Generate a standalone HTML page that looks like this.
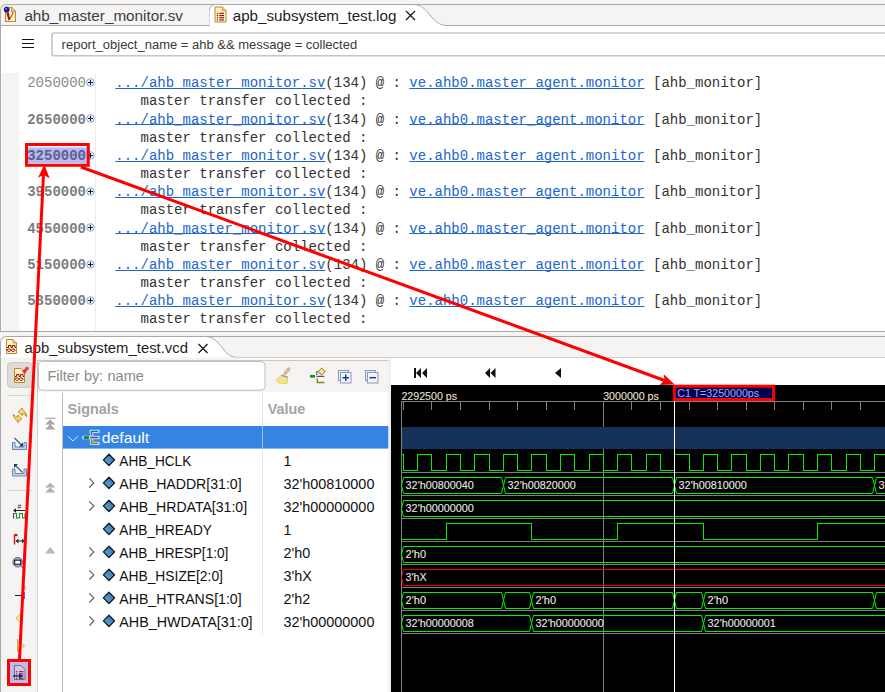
<!DOCTYPE html>
<html><head><meta charset="utf-8"><style>
html,body{margin:0;padding:0;width:885px;height:692px;overflow:hidden;background:#f5f4f2;}
svg{display:block;}
</style></head><body>
<svg width="885" height="692" viewBox="0 0 885 692"><defs><linearGradient id="dg" x1="1" y1="0" x2="0" y2="1"><stop offset="0" stop-color="#3c5cc0"/><stop offset="1" stop-color="#5cc0c0"/></linearGradient><linearGradient id="yg" x1="0" y1="0" x2="0" y2="1"><stop offset="0" stop-color="#fff2b0"/><stop offset="1" stop-color="#eab830"/></linearGradient></defs>
<rect x="0" y="0" width="885" height="692" fill="#f5f4f2"/>
<rect x="7" y="4" width="878" height="1" fill="#a9a9a9"/>
<path d="M0.5,26 L0.5,11 Q0.5,4.5 7,4.5" fill="none" stroke="#a9a9a9" stroke-width="1"/>
<rect x="209" y="10" width="1" height="16" fill="#b4b4b4"/>
<rect x="0" y="25" width="210" height="1" fill="#a9a9a9"/>
<path d="M209.5,26 L209.5,10 Q210,5 215,4.5 L413,4.5 C421,4.5 425,9 430,15 C435,21 439,25.5 447,25.5 L447,27 L209.5,27 Z" fill="#ffffff"/>
<rect x="447" y="26" width="438" height="1.2" fill="#f6f5f4"/>
<path d="M209.5,10 Q210,5 215,4.5 L413,4.5 C421,4.5 425,9 430,15 C435,21 439,25.5 447,25.5 L885,25.5" fill="none" stroke="#a9a9a9" stroke-width="1"/>
<text x="24.4" y="20.7" font-family="'Liberation Sans', sans-serif" font-size="15.3px" fill="#3c3c3c" textLength="158.5" lengthAdjust="spacingAndGlyphs">ahb_master_monitor.sv</text>
<text x="232.7" y="20.7" font-family="'Liberation Sans', sans-serif" font-size="15.2px" fill="#1e1e1e" textLength="163.7" lengthAdjust="spacingAndGlyphs">apb_subsystem_test.log</text>
<path d="M406,11 L415,20 M415,11 L406,20" stroke="#1a1a1a" stroke-width="1.3"/>
<path d="M5.5,7.3 L11.5,7.3 L15.5,11.3 L15.5,21.5 L5.5,21.5 Z" fill="#fdf0c4" stroke="#b88c2c" stroke-width="1.1"/>
<path d="M11.5,7.3 L11.5,11.3 L15.5,11.3" fill="#e8d090" stroke="#b88c2c" stroke-width="0.8"/>
<path d="M6.3,12.5 L8.8,12.5 L9.8,18 L12.5,13.5 L11.8,12.5 L13.8,12.5 L9.5,20.3 L8.4,20.3 Z" fill="#9a1212"/>
<circle cx="6.7" cy="9.6" r="2.9" fill="#13208a"/><circle cx="6.1" cy="8.9" r="1.1" fill="#5a70c8"/>
<path d="M215,7 L222.5,7 L226,10.5 L226,22 L215,22 Z" fill="#fbeec0" stroke="#b48a30" stroke-width="1"/>
<path d="M222.5,7 L222.5,10.5 L226,10.5" fill="#e8d090" stroke="#b48a30" stroke-width="0.8"/>
<rect x="216.8" y="12.8" width="1.2" height="1.1" fill="#9a0a0a"/><rect x="219.3" y="12.8" width="4.7" height="1.1" fill="#9a0a0a"/>
<rect x="216.8" y="15.0" width="1.2" height="1.1" fill="#9a0a0a"/><rect x="219.3" y="15.0" width="4.7" height="1.1" fill="#9a0a0a"/>
<rect x="216.8" y="17.2" width="1.2" height="1.1" fill="#9a0a0a"/><rect x="219.3" y="17.2" width="4.7" height="1.1" fill="#9a0a0a"/>
<rect x="216.8" y="19.4" width="1.2" height="1.1" fill="#9a0a0a"/><rect x="219.3" y="19.4" width="4.7" height="1.1" fill="#9a0a0a"/>
<rect x="1" y="26" width="884" height="305" fill="#ffffff"/>
<rect x="0" y="26" width="1" height="305" fill="#a9a9a9"/>
<rect x="22" y="39" width="12" height="1" fill="#111"/>
<rect x="22" y="43" width="12" height="1" fill="#111"/>
<rect x="22" y="47" width="12" height="1" fill="#111"/>
<rect x="52" y="33" width="840" height="22.8" rx="2" fill="#fff" stroke="#c6c6c6" stroke-width="1.6"/>
<text x="61.6" y="49.2" font-family="'Liberation Sans', sans-serif" font-size="13px" fill="#3a3a3a">report_object_name = ahb &amp;&amp; message = collected</text>
<rect x="2" y="73" width="17" height="258" fill="#f4f4f3"/>
<rect x="95" y="73" width="1" height="258" fill="#ececec"/>
<text x="86" y="87.3" text-anchor="end" font-family="'Liberation Mono', monospace" font-size="14px" font-weight="normal" fill="#8a8a8a">2050000</text>
<circle cx="90.5" cy="82.5" r="3.8" fill="#e2f2fc" stroke="#90a8c4" stroke-width="1"/>
<rect x="88" y="82" width="5" height="1" fill="#101a34"/><rect x="90" y="80" width="1" height="5" fill="#101a34"/>
<text x="115.3" y="87.3" font-family="'Liberation Mono', monospace" font-size="14px" fill="#333"><tspan fill="#2166cc">.../ahb_master_monitor.sv</tspan>(134) @ : <tspan fill="#2166cc">ve.ahb0.master_agent.monitor</tspan> [ahb_monitor]</text>
<rect x="115.3" y="88" width="210.0" height="1" fill="#2166cc"/>
<rect x="409.3" y="88" width="235.20000000000002" height="1" fill="#2166cc"/>
<text x="140.5" y="105.44999999999999" font-family="'Liberation Mono', monospace" font-size="14px" fill="#333">master transfer collected :</text>
<text x="86" y="123.6" text-anchor="end" font-family="'Liberation Mono', monospace" font-size="14px" font-weight="bold" fill="#7d7d7d">2650000</text>
<circle cx="90.5" cy="118.5" r="3.8" fill="#e2f2fc" stroke="#90a8c4" stroke-width="1"/>
<rect x="88" y="118" width="5" height="1" fill="#101a34"/><rect x="90" y="116" width="1" height="5" fill="#101a34"/>
<text x="115.3" y="123.6" font-family="'Liberation Mono', monospace" font-size="14px" fill="#333"><tspan fill="#2166cc">.../ahb_master_monitor.sv</tspan>(134) @ : <tspan fill="#2166cc">ve.ahb0.master_agent.monitor</tspan> [ahb_monitor]</text>
<rect x="115.3" y="124" width="210.0" height="1" fill="#2166cc"/>
<rect x="409.3" y="124" width="235.20000000000002" height="1" fill="#2166cc"/>
<text x="140.5" y="141.75" font-family="'Liberation Mono', monospace" font-size="14px" fill="#333">master transfer collected :</text>
<rect x="26.5" y="147.39999999999998" width="61" height="16" fill="#b8b8f4"/>
<text x="86" y="159.89999999999998" text-anchor="end" font-family="'Liberation Mono', monospace" font-size="14px" font-weight="bold" fill="#5d5d8c">3250000</text>
<circle cx="90.5" cy="155.5" r="3.8" fill="#e2f2fc" stroke="#90a8c4" stroke-width="1"/>
<rect x="88" y="155" width="5" height="1" fill="#101a34"/><rect x="90" y="153" width="1" height="5" fill="#101a34"/>
<text x="115.3" y="159.89999999999998" font-family="'Liberation Mono', monospace" font-size="14px" fill="#333"><tspan fill="#2166cc">.../ahb_master_monitor.sv</tspan>(134) @ : <tspan fill="#2166cc">ve.ahb0.master_agent.monitor</tspan> [ahb_monitor]</text>
<rect x="115.3" y="161" width="210.0" height="1" fill="#2166cc"/>
<rect x="409.3" y="161" width="235.20000000000002" height="1" fill="#2166cc"/>
<text x="140.5" y="178.04999999999998" font-family="'Liberation Mono', monospace" font-size="14px" fill="#333">master transfer collected :</text>
<text x="86" y="196.2" text-anchor="end" font-family="'Liberation Mono', monospace" font-size="14px" font-weight="bold" fill="#7d7d7d">3950000</text>
<circle cx="90.5" cy="191.5" r="3.8" fill="#e2f2fc" stroke="#90a8c4" stroke-width="1"/>
<rect x="88" y="191" width="5" height="1" fill="#101a34"/><rect x="90" y="189" width="1" height="5" fill="#101a34"/>
<text x="115.3" y="196.2" font-family="'Liberation Mono', monospace" font-size="14px" fill="#333"><tspan fill="#2166cc">.../ahb_master_monitor.sv</tspan>(134) @ : <tspan fill="#2166cc">ve.ahb0.master_agent.monitor</tspan> [ahb_monitor]</text>
<rect x="115.3" y="197" width="210.0" height="1" fill="#2166cc"/>
<rect x="409.3" y="197" width="235.20000000000002" height="1" fill="#2166cc"/>
<text x="140.5" y="214.35" font-family="'Liberation Mono', monospace" font-size="14px" fill="#333">master transfer collected :</text>
<text x="86" y="232.5" text-anchor="end" font-family="'Liberation Mono', monospace" font-size="14px" font-weight="bold" fill="#7d7d7d">4550000</text>
<circle cx="90.5" cy="227.5" r="3.8" fill="#e2f2fc" stroke="#90a8c4" stroke-width="1"/>
<rect x="88" y="227" width="5" height="1" fill="#101a34"/><rect x="90" y="225" width="1" height="5" fill="#101a34"/>
<text x="115.3" y="232.5" font-family="'Liberation Mono', monospace" font-size="14px" fill="#333"><tspan fill="#2166cc">.../ahb_master_monitor.sv</tspan>(134) @ : <tspan fill="#2166cc">ve.ahb0.master_agent.monitor</tspan> [ahb_monitor]</text>
<rect x="115.3" y="233" width="210.0" height="1" fill="#2166cc"/>
<rect x="409.3" y="233" width="235.20000000000002" height="1" fill="#2166cc"/>
<text x="140.5" y="250.65" font-family="'Liberation Mono', monospace" font-size="14px" fill="#333">master transfer collected :</text>
<text x="86" y="268.8" text-anchor="end" font-family="'Liberation Mono', monospace" font-size="14px" font-weight="bold" fill="#7d7d7d">5150000</text>
<circle cx="90.5" cy="264.5" r="3.8" fill="#e2f2fc" stroke="#90a8c4" stroke-width="1"/>
<rect x="88" y="264" width="5" height="1" fill="#101a34"/><rect x="90" y="262" width="1" height="5" fill="#101a34"/>
<text x="115.3" y="268.8" font-family="'Liberation Mono', monospace" font-size="14px" fill="#333"><tspan fill="#2166cc">.../ahb_master_monitor.sv</tspan>(134) @ : <tspan fill="#2166cc">ve.ahb0.master_agent.monitor</tspan> [ahb_monitor]</text>
<rect x="115.3" y="270" width="210.0" height="1" fill="#2166cc"/>
<rect x="409.3" y="270" width="235.20000000000002" height="1" fill="#2166cc"/>
<text x="140.5" y="286.95" font-family="'Liberation Mono', monospace" font-size="14px" fill="#333">master transfer collected :</text>
<text x="86" y="305.09999999999997" text-anchor="end" font-family="'Liberation Mono', monospace" font-size="14px" font-weight="bold" fill="#7d7d7d">5850000</text>
<circle cx="90.5" cy="300.5" r="3.8" fill="#e2f2fc" stroke="#90a8c4" stroke-width="1"/>
<rect x="88" y="300" width="5" height="1" fill="#101a34"/><rect x="90" y="298" width="1" height="5" fill="#101a34"/>
<text x="115.3" y="305.09999999999997" font-family="'Liberation Mono', monospace" font-size="14px" fill="#333"><tspan fill="#2166cc">.../ahb_master_monitor.sv</tspan>(134) @ : <tspan fill="#2166cc">ve.ahb0.master_agent.monitor</tspan> [ahb_monitor]</text>
<rect x="115.3" y="306" width="210.0" height="1" fill="#2166cc"/>
<rect x="409.3" y="306" width="235.20000000000002" height="1" fill="#2166cc"/>
<text x="140.5" y="323.24999999999994" font-family="'Liberation Mono', monospace" font-size="14px" fill="#333">master transfer collected :</text>
<rect x="0" y="331" width="885" height="1" fill="#a9a9a9"/>
<rect x="205" y="336" width="680" height="1" fill="#a9a9a9"/>
<rect x="0" y="357" width="885" height="1" fill="#a9a9a9"/>
<path d="M0.5,358 L0.5,343 Q0.5,336.5 7,336.5 L205,336.5 C215,336.5 219,344 224,350 C228,355 232,357.5 238,357.5 L238,358 Z" fill="#ffffff"/>
<path d="M0.5,358 L0.5,343 Q0.5,336.5 7,336.5 L205,336.5 C215,336.5 219,344 224,350 C228,355 232,357.5 238,357.5" fill="none" stroke="#a9a9a9" stroke-width="1"/>
<text x="24.4" y="352.8" font-family="'Liberation Sans', sans-serif" font-size="15.2px" fill="#1e1e1e" textLength="163.6" lengthAdjust="spacingAndGlyphs">apb_subsystem_test.vcd</text>
<path d="M198.5,344 L207.5,353 M207.5,344 L198.5,353" stroke="#1a1a1a" stroke-width="1.3"/>
<path d="M6.5,339.5 L13,339.5 L16.5,343 L16.5,353.5 L6.5,353.5 Z" fill="#fcf0c4" stroke="#b48a30" stroke-width="1"/>
<path d="M13,339.5 L13,343 L16.5,343" fill="#e8d090" stroke="#b48a30" stroke-width="0.8"/>
<path d="M7,347.5 h1.5 v-2 h2.5 v2 h1.5 v-2 h2.5 v2 h1" fill="none" stroke="#9a0a0a" stroke-width="1"/>
<path d="M7,350.2 l1.2,-1.2 h1.6 l1.2,1.2 l-1.2,1.2 h-1.6 Z M11.2,350.2 l1.2,-1.2 h1.6 l1.2,1.2 l-1.2,1.2 h-1.6 Z" fill="none" stroke="#9a0a0a" stroke-width="1"/>
<rect x="0" y="357.5" width="885" height="334.5" fill="#f5f4f2"/>
<rect x="238" y="358" width="647" height="2" fill="#faf9f8"/>
<rect x="37" y="360" width="848" height="1" fill="#cdc7c1"/>
<rect x="0" y="358" width="1" height="334" fill="#a9a9a9"/>
<rect x="37" y="360" width="1" height="332" fill="#cbc6c1"/>
<rect x="37.8" y="392.3" width="351" height="300" fill="#ffffff"/>
<rect x="7.5" y="362.5" width="24.5" height="25" rx="3.5" fill="#dedad5" stroke="#cdc9c4" stroke-width="1"/>
<rect x="7" y="395" width="25" height="1" fill="#d8d6d3"/>
<rect x="7" y="490" width="25" height="1" fill="#d8d6d3"/>
<rect x="38.5" y="361.5" width="226.5" height="28.7" rx="4" fill="#ffffff" stroke="#c2beb9" stroke-width="1"/>
<text x="47.4" y="380.8" font-family="'Liberation Sans', sans-serif" font-size="14.6px" fill="#8d8a86">Filter by: name</text>
<rect x="62" y="393" width="1" height="299" fill="#bcbcbc"/>
<rect x="262" y="393" width="1" height="241" fill="#e6e6e6"/>
<text x="67.6" y="413.6" font-family="'Liberation Sans', sans-serif" font-size="14.4px" font-weight="bold" fill="#a3a3a3">Signals</text>
<text x="267.7" y="413.6" font-family="'Liberation Sans', sans-serif" font-size="14.4px" font-weight="bold" fill="#a3a3a3">Value</text>
<rect x="63" y="426" width="325.5" height="22.6" fill="#3584e4"/>
<rect x="262" y="426" width="1" height="22.6" fill="#ffffff" opacity="0.5"/>
<path d="M68.2,436.4 L73,441 L77.8,436.4" fill="none" stroke="#dce6f8" stroke-width="1"/>
<text x="101.8" y="442.6" font-family="'Liberation Sans', sans-serif" font-size="15.4px" fill="#ffffff" textLength="47.3" lengthAdjust="spacingAndGlyphs">default</text>
<path d="M83.9,437.5 h5 M91.4,431.4 h6.5 M91.6,431.4 v4 M90.2,437.5 h7.7 M91.6,439.6 v3.8 h6.3" fill="none" stroke="#bcd6f8" stroke-width="3.4" stroke-linecap="square"/>
<rect x="83.9" y="436.2" width="5" height="2.7" fill="#0a8a2a"/>
<path d="M97.9,431.4 h-6.1 q-0.3,0 -0.3,0.4 v2.8 q0,0.6 -0.6,0.6" fill="none" stroke="#1a7a6a" stroke-width="1.3"/>
<path d="M90.2,437.5 h7.7" stroke="#8a2a8a" stroke-width="1.3"/>
<path d="M91,439.6 q0.6,0 0.6,0.6 v3.2 h6.3" fill="none" stroke="#6a8a10" stroke-width="1.3"/>
<path d="M109,454.3 L114.6,459.90000000000003 L109,465.50000000000006 L103.4,459.90000000000003 Z" fill="url(#dg)" stroke="#0e1620" stroke-width="1.3" stroke-linejoin="round"/>
<text x="119.3" y="465.8" font-family="'Liberation Sans', sans-serif" font-size="14.2px" fill="#111" textLength="72.0" lengthAdjust="spacingAndGlyphs">AHB_HCLK</text>
<text x="283.6" y="465.8" font-family="'Liberation Sans', sans-serif" font-size="14.4px" fill="#111">1</text>
<path d="M109,477.3 L114.6,482.90000000000003 L109,488.50000000000006 L103.4,482.90000000000003 Z" fill="url(#dg)" stroke="#0e1620" stroke-width="1.3" stroke-linejoin="round"/>
<path d="M89.4,478.50000000000006 L93.8,482.90000000000003 L89.4,487.50000000000006" fill="none" stroke="#5a5a5a" stroke-width="1.1"/>
<text x="119.3" y="488.8" font-family="'Liberation Sans', sans-serif" font-size="14.2px" fill="#111" textLength="122.3" lengthAdjust="spacingAndGlyphs">AHB_HADDR[31:0]</text>
<text x="283.6" y="488.8" font-family="'Liberation Sans', sans-serif" font-size="14.4px" fill="#111">32'h00810000</text>
<path d="M109,500.3 L114.6,505.90000000000003 L109,511.50000000000006 L103.4,505.90000000000003 Z" fill="url(#dg)" stroke="#0e1620" stroke-width="1.3" stroke-linejoin="round"/>
<path d="M89.4,501.50000000000006 L93.8,505.90000000000003 L89.4,510.50000000000006" fill="none" stroke="#5a5a5a" stroke-width="1.1"/>
<text x="119.3" y="511.8" font-family="'Liberation Sans', sans-serif" font-size="14.2px" fill="#111" textLength="127.8" lengthAdjust="spacingAndGlyphs">AHB_HRDATA[31:0]</text>
<text x="283.6" y="511.8" font-family="'Liberation Sans', sans-serif" font-size="14.4px" fill="#111">32'h00000000</text>
<path d="M109,523.3 L114.6,528.9 L109,534.5 L103.4,528.9 Z" fill="url(#dg)" stroke="#0e1620" stroke-width="1.3" stroke-linejoin="round"/>
<text x="119.3" y="534.8" font-family="'Liberation Sans', sans-serif" font-size="14.2px" fill="#111" textLength="92.6" lengthAdjust="spacingAndGlyphs">AHB_HREADY</text>
<text x="283.6" y="534.8" font-family="'Liberation Sans', sans-serif" font-size="14.4px" fill="#111">1</text>
<path d="M109,546.3 L114.6,551.9 L109,557.5 L103.4,551.9 Z" fill="url(#dg)" stroke="#0e1620" stroke-width="1.3" stroke-linejoin="round"/>
<path d="M89.4,547.5 L93.8,551.9 L89.4,556.5" fill="none" stroke="#5a5a5a" stroke-width="1.1"/>
<text x="119.3" y="557.8" font-family="'Liberation Sans', sans-serif" font-size="14.2px" fill="#111" textLength="109.1" lengthAdjust="spacingAndGlyphs">AHB_HRESP[1:0]</text>
<text x="283.6" y="557.8" font-family="'Liberation Sans', sans-serif" font-size="14.4px" fill="#111">2'h0</text>
<path d="M109,569.3 L114.6,574.9 L109,580.5 L103.4,574.9 Z" fill="url(#dg)" stroke="#0e1620" stroke-width="1.3" stroke-linejoin="round"/>
<path d="M89.4,570.5 L93.8,574.9 L89.4,579.5" fill="none" stroke="#5a5a5a" stroke-width="1.1"/>
<text x="119.3" y="580.8" font-family="'Liberation Sans', sans-serif" font-size="14.2px" fill="#111" textLength="103.6" lengthAdjust="spacingAndGlyphs">AHB_HSIZE[2:0]</text>
<text x="283.6" y="580.8" font-family="'Liberation Sans', sans-serif" font-size="14.4px" fill="#111">3'hX</text>
<path d="M109,592.3 L114.6,597.9 L109,603.5 L103.4,597.9 Z" fill="url(#dg)" stroke="#0e1620" stroke-width="1.3" stroke-linejoin="round"/>
<path d="M89.4,593.5 L93.8,597.9 L89.4,602.5" fill="none" stroke="#5a5a5a" stroke-width="1.1"/>
<text x="119.3" y="603.8" font-family="'Liberation Sans', sans-serif" font-size="14.2px" fill="#111" textLength="122.3" lengthAdjust="spacingAndGlyphs">AHB_HTRANS[1:0]</text>
<text x="283.6" y="603.8" font-family="'Liberation Sans', sans-serif" font-size="14.4px" fill="#111">2'h2</text>
<path d="M109,615.3 L114.6,620.9 L109,626.5 L103.4,620.9 Z" fill="url(#dg)" stroke="#0e1620" stroke-width="1.3" stroke-linejoin="round"/>
<path d="M89.4,616.5 L93.8,620.9 L89.4,625.5" fill="none" stroke="#5a5a5a" stroke-width="1.1"/>
<text x="119.3" y="626.8" font-family="'Liberation Sans', sans-serif" font-size="14.2px" fill="#111" textLength="133.3" lengthAdjust="spacingAndGlyphs">AHB_HWDATA[31:0]</text>
<text x="283.6" y="626.8" font-family="'Liberation Sans', sans-serif" font-size="14.4px" fill="#111">32'h00000000</text>
<rect x="388.5" y="358" width="2.5" height="334" fill="#f0efee"/>
<rect x="391" y="358" width="494" height="27" fill="#ffffff"/>
<rect x="391" y="385" width="494" height="307" fill="#000000"/>
<rect x="414" y="368" width="2" height="10" fill="#111"/><path d="M421,368 L416,373 L421,378 Z M427,368 L422,373 L427,378 Z" fill="#111"/>
<path d="M490,368 L485,373 L490,378 Z M495.5,368 L490.5,373 L495.5,378 Z" fill="#111"/>
<path d="M561,368 L555,373 L561,378 Z" fill="#111"/>
<text x="401.4" y="400" font-family="'Liberation Sans', sans-serif" font-size="10.15px" fill="#eee6d0" stroke="#eee6d0" stroke-width="0.08" textLength="55.7" lengthAdjust="spacingAndGlyphs">2292500 ps</text>
<text x="603.2" y="400" font-family="'Liberation Sans', sans-serif" font-size="10.15px" fill="#eee6d0" stroke="#eee6d0" stroke-width="0.08" textLength="55.7" lengthAdjust="spacingAndGlyphs">3000000 ps</text>
<rect x="401" y="401" width="484" height="1" fill="#808080"/>
<rect x="403" y="402" width="1" height="8" fill="#808080"/>
<rect x="431" y="402" width="1" height="8" fill="#808080"/>
<rect x="460" y="402" width="1" height="8" fill="#808080"/>
<rect x="489" y="402" width="1" height="8" fill="#808080"/>
<rect x="517" y="402" width="1" height="8" fill="#808080"/>
<rect x="546" y="402" width="1" height="8" fill="#808080"/>
<rect x="574" y="402" width="1" height="8" fill="#808080"/>
<rect x="603" y="402" width="1" height="8" fill="#808080"/>
<rect x="631" y="402" width="1" height="8" fill="#808080"/>
<rect x="660" y="402" width="1" height="8" fill="#808080"/>
<rect x="689" y="402" width="1" height="8" fill="#808080"/>
<rect x="717" y="402" width="1" height="8" fill="#808080"/>
<rect x="746" y="402" width="1" height="8" fill="#808080"/>
<rect x="774" y="402" width="1" height="8" fill="#808080"/>
<rect x="803" y="402" width="1" height="8" fill="#808080"/>
<rect x="831" y="402" width="1" height="8" fill="#808080"/>
<rect x="860" y="402" width="1" height="8" fill="#808080"/>
<rect x="401" y="401" width="1" height="291" fill="#808080"/>
<rect x="603" y="401" width="1" height="291" fill="#808080"/>
<rect x="402" y="427" width="483" height="22" fill="#17325a"/>
<rect x="402" y="472" width="483" height="1" fill="#808080"/>
<rect x="402" y="495" width="483" height="1" fill="#808080"/>
<rect x="402" y="518" width="483" height="1" fill="#808080"/>
<rect x="402" y="541" width="483" height="1" fill="#808080"/>
<rect x="402" y="564" width="483" height="1" fill="#808080"/>
<rect x="402" y="587" width="483" height="1" fill="#808080"/>
<rect x="402" y="610" width="483" height="1" fill="#808080"/>
<rect x="402" y="633" width="483" height="1" fill="#808080"/>
<path d="M401,454.5 L403.5,454.5 L403.5,470.5 L417.5,470.5 L417.5,454.5 L431.5,454.5 L431.5,470.5 L446.5,470.5 L446.5,454.5 L460.5,454.5 L460.5,470.5 L474.5,470.5 L474.5,454.5 L489.5,454.5 L489.5,470.5 L503.5,470.5 L503.5,454.5 L517.5,454.5 L517.5,470.5 L531.5,470.5 L531.5,454.5 L546.5,454.5 L546.5,470.5 L560.5,470.5 L560.5,454.5 L574.5,454.5 L574.5,470.5 L589.5,470.5 L589.5,454.5 L603.5,454.5 L603.5,470.5 L617.5,470.5 L617.5,454.5 L631.5,454.5 L631.5,470.5 L646.5,470.5 L646.5,454.5 L660.5,454.5 L660.5,470.5 L674.5,470.5 L674.5,454.5 L689.5,454.5 L689.5,470.5 L703.5,470.5 L703.5,454.5 L717.5,454.5 L717.5,470.5 L731.5,470.5 L731.5,454.5 L746.5,454.5 L746.5,470.5 L760.5,470.5 L760.5,454.5 L774.5,454.5 L774.5,470.5 L788.5,470.5 L788.5,454.5 L803.5,454.5 L803.5,470.5 L817.5,470.5 L817.5,454.5 L831.5,454.5 L831.5,470.5 L846.5,470.5 L846.5,454.5 L860.5,454.5 L860.5,470.5 L874.5,470.5 L874.5,454.5 L888.5,454.5 L888.5,470.5 L886,470.5" fill="none" stroke="#00f000" stroke-width="1" shape-rendering="crispEdges"/>
<path d="M401.5,485.5 L403.5,477.5 L501.5,477.5 L503.5,485.5 L501.5,493.5 L403.5,493.5 Z M503.5,485.5 L505.5,477.5 L672.5,477.5 L674.5,485.5 L672.5,493.5 L505.5,493.5 Z M674.5,485.5 L676.5,477.5 L872.5,477.5 L874.5,485.5 L872.5,493.5 L676.5,493.5 Z M874.5,485.5 L876.5,477.5 L898.5,477.5 L900.5,485.5 L898.5,493.5 L876.5,493.5 Z" fill="none" stroke="#00f000" stroke-width="1"/>
<text x="405.6" y="489.2" font-family="'Liberation Sans', sans-serif" font-size="10.15px" fill="#ececE4" stroke="#ececE4" stroke-width="0.08" textLength="68.3" lengthAdjust="spacingAndGlyphs">32'h00800040</text>
<text x="507.6" y="489.2" font-family="'Liberation Sans', sans-serif" font-size="10.15px" fill="#ececE4" stroke="#ececE4" stroke-width="0.08" textLength="68.3" lengthAdjust="spacingAndGlyphs">32'h00820000</text>
<text x="678.6" y="489.2" font-family="'Liberation Sans', sans-serif" font-size="10.15px" fill="#ececE4" stroke="#ececE4" stroke-width="0.08" textLength="68.3" lengthAdjust="spacingAndGlyphs">32'h00810000</text>
<text x="878.6" y="489.2" font-family="'Liberation Sans', sans-serif" font-size="10.15px" fill="#ececE4" stroke="#ececE4" stroke-width="0.08" textLength="26.5" lengthAdjust="spacingAndGlyphs">32'h0</text>
<path d="M401.5,508.5 L403.5,500.5 L898.5,500.5 L900.5,508.5 L898.5,516.5 L403.5,516.5 Z" fill="none" stroke="#00f000" stroke-width="1"/>
<text x="405.6" y="512.2" font-family="'Liberation Sans', sans-serif" font-size="10.15px" fill="#ececE4" stroke="#ececE4" stroke-width="0.08" textLength="68.3" lengthAdjust="spacingAndGlyphs">32'h00000000</text>
<path d="M401,539.5 L446.5,539.5 L446.5,523.5 L531.5,523.5 L531.5,539.5 L617.5,539.5 L617.5,523.5 L703.5,523.5 L703.5,539.5 L817.5,539.5 L817.5,523.5 L886,523.5" fill="none" stroke="#00f000" stroke-width="1" shape-rendering="crispEdges"/>
<path d="M401.5,554.5 L403.5,546.5 L898.5,546.5 L900.5,554.5 L898.5,562.5 L403.5,562.5 Z" fill="none" stroke="#00f000" stroke-width="1"/>
<text x="405.6" y="558.2" font-family="'Liberation Sans', sans-serif" font-size="10.15px" fill="#ececE4" stroke="#ececE4" stroke-width="0.08" textLength="20.5" lengthAdjust="spacingAndGlyphs">2'h0</text>
<path d="M401.5,577.5 L403.5,569.5 L898.5,569.5 L900.5,577.5 L898.5,585.5 L403.5,585.5 Z" fill="none" stroke="#f00000" stroke-width="1"/>
<text x="405.6" y="581.2" font-family="'Liberation Sans', sans-serif" font-size="10.15px" fill="#ececE4" stroke="#ececE4" stroke-width="0.08" textLength="21.0" lengthAdjust="spacingAndGlyphs">3'hX</text>
<path d="M401.5,600.5 L403.5,592.5 L501.5,592.5 L503.5,600.5 L501.5,608.5 L403.5,608.5 Z M503.5,600.5 L505.5,592.5 L529.5,592.5 L531.5,600.5 L529.5,608.5 L505.5,608.5 Z M531.5,600.5 L533.5,592.5 L672.5,592.5 L674.5,600.5 L672.5,608.5 L533.5,608.5 Z M674.5,600.5 L676.5,592.5 L701.5,592.5 L703.5,600.5 L701.5,608.5 L676.5,608.5 Z M703.5,600.5 L705.5,592.5 L872.5,592.5 L874.5,600.5 L872.5,608.5 L705.5,608.5 Z M874.5,600.5 L876.5,592.5 L898.5,592.5 L900.5,600.5 L898.5,608.5 L876.5,608.5 Z" fill="none" stroke="#00f000" stroke-width="1"/>
<text x="405.6" y="604.2" font-family="'Liberation Sans', sans-serif" font-size="10.15px" fill="#ececE4" stroke="#ececE4" stroke-width="0.08" textLength="20.5" lengthAdjust="spacingAndGlyphs">2'h0</text>
<text x="535.6" y="604.2" font-family="'Liberation Sans', sans-serif" font-size="10.15px" fill="#ececE4" stroke="#ececE4" stroke-width="0.08" textLength="20.5" lengthAdjust="spacingAndGlyphs">2'h0</text>
<text x="707.6" y="604.2" font-family="'Liberation Sans', sans-serif" font-size="10.15px" fill="#ececE4" stroke="#ececE4" stroke-width="0.08" textLength="20.5" lengthAdjust="spacingAndGlyphs">2'h0</text>
<path d="M401.5,623.5 L403.5,615.5 L529.5,615.5 L531.5,623.5 L529.5,631.5 L403.5,631.5 Z M531.5,623.5 L533.5,615.5 L701.5,615.5 L703.5,623.5 L701.5,631.5 L533.5,631.5 Z M703.5,623.5 L705.5,615.5 L898.5,615.5 L900.5,623.5 L898.5,631.5 L705.5,631.5 Z" fill="none" stroke="#00f000" stroke-width="1"/>
<text x="405.6" y="627.2" font-family="'Liberation Sans', sans-serif" font-size="10.15px" fill="#ececE4" stroke="#ececE4" stroke-width="0.08" textLength="68.3" lengthAdjust="spacingAndGlyphs">32'h00000008</text>
<text x="535.6" y="627.2" font-family="'Liberation Sans', sans-serif" font-size="10.15px" fill="#ececE4" stroke="#ececE4" stroke-width="0.08" textLength="68.3" lengthAdjust="spacingAndGlyphs">32'h00000000</text>
<text x="707.6" y="627.2" font-family="'Liberation Sans', sans-serif" font-size="10.15px" fill="#ececE4" stroke="#ececE4" stroke-width="0.08" textLength="68.3" lengthAdjust="spacingAndGlyphs">32'h00000001</text>
<rect x="674" y="385" width="1" height="307" fill="#ffffff"/>
<rect x="676" y="388" width="96" height="10" fill="#000050"/>
<text x="677.2" y="397" font-family="'Liberation Sans', sans-serif" font-size="10.15px" fill="#a0a0f0" stroke="#a0a0f0" stroke-width="0.08" textLength="81.9" lengthAdjust="spacingAndGlyphs">C1 T=3250000ps</text>
<path d="M14.5,368.5 L21,368.5 L24.5,372 L24.5,382.5 L14.5,382.5 Z" fill="#fcf0c4" stroke="#b48a30" stroke-width="1"/>
<path d="M15,376.5 h1.5 v-2 h2.5 v2 h1.5 v-2 h2.5 v2 h1" fill="none" stroke="#9a0a0a" stroke-width="1"/>
<path d="M15,379.2 l1.2,-1.2 h1.6 l1.2,1.2 l-1.2,1.2 h-1.6 Z M19.2,379.2 l1.2,-1.2 h1.6 l1.2,1.2 l-1.2,1.2 h-1.6 Z" fill="none" stroke="#9a0a0a" stroke-width="1"/>
<path d="M20.5,376 L24,372.5" stroke="#808080" stroke-width="0.8"/>
<path d="M22,371 L27.5,367 L28.5,368 L25,374 Z" fill="#e03040"/><circle cx="27" cy="368.5" r="1.8" fill="#e84050"/>
<path d="M18,411.8 L22.2,407.9 L22.2,410 Q25.8,410.6 26.8,416.8 Q24.5,413.6 22.2,413.6 L22.2,415.5 Z" fill="url(#yg)" stroke="#c08818" stroke-width="0.9"/>
<path d="M21.8,418.8 L17.6,422.6 L17.6,420.6 Q14.2,420 13.2,414.2 Q15.5,417.2 17.6,417.2 L17.6,415 Z" fill="url(#yg)" stroke="#c08818" stroke-width="0.9"/>
<path d="M12.5,442.5 v7 h14 v-7 h-2.5 v4.5 h-9 v-4.5 Z" fill="#c8d4ea" stroke="#6a84b0" stroke-width="1"/>
<path d="M14.5,438 L22.5,446" stroke="#2a5a8a" stroke-width="1.1"/>
<path d="M12.5,469 v7 h14 v-7 h-2.5 v4.5 h-9 v-4.5 Z" fill="#c8d4ea" stroke="#6a84b0" stroke-width="1"/>
<path d="M22.5,472.5 L14.5,464.5" stroke="#2a5a8a" stroke-width="1.1"/>
<path d="M23,446.5 L23,442.5 L19,446.5 Z" fill="#1a3a6a"/>
<path d="M14,464 L18,464 L14,468 Z" fill="#1a3a6a"/>
<path d="M14,510.5 h11" stroke="#222" stroke-width="1"/><path d="M13,510.5 l3,-2.2 v4.4 Z" fill="#222"/>
<text x="17.6" y="508.6" font-family="'Liberation Sans', sans-serif" font-size="6.5px" fill="#222">#</text>
<path d="M13.5,518 v-4.5 h3 v4.5 h3 v-4.5 h3 v4.5 h2.5 v-4.5" fill="none" stroke="#1a8a2a" stroke-width="1.1"/>
<path d="M13.5,518.5 v-5" stroke="#8a2a8a" stroke-width="1.1"/>
<path d="M14.5,534.5 v10" stroke="#c01818" stroke-width="1.4"/><rect x="14.5" y="534" width="3" height="2.2" fill="#c01818"/>
<path d="M16,541 h8.5" stroke="#333" stroke-width="1.1"/><path d="M15.5,541 l3,-2.5 v5 Z M25,541 l-3,-2.5 v5 Z" fill="#333"/>
<path d="M21,566 L25,570" stroke="#b07a20" stroke-width="1.5"/>
<circle cx="17.7" cy="562.2" r="4.8" fill="#9ab0d0" stroke="#4a6a90" stroke-width="1"/>
<rect x="14.7" y="560.2" width="6" height="4" fill="#fff" stroke="#111" stroke-width="1"/>
<path d="M15,595.5 h8" stroke="#222" stroke-width="1"/><path d="M24,592 v7" stroke="#6a1ac0" stroke-width="1.5"/>
<path d="M24,587 h1.5 M24,589 h1.5" stroke="#555" stroke-width="0.8"/>
<path d="M20.5,614 L16,618.2 L20.5,622.5 Z" fill="#fbe9a8" stroke="#d0a030" stroke-width="0.8"/>
<path d="M17.5,639 v13" stroke="#d0a030" stroke-width="1"/><path d="M20,642 L24.5,645.8 L20,649.5 Z" fill="#fbe9a8" stroke="#d0a030" stroke-width="0.8"/>
<rect x="10" y="662" width="18" height="21" fill="#b8bcf4"/>
<path d="M14.5,665.5 L21,665.5 L25,669.5 L25,679.5 L14.5,679.5 Z" fill="#d0c8e0" stroke="#8a6a60" stroke-width="1"/>
<rect x="16" y="671.2" width="1.3" height="1" fill="#7a1040"/><rect x="19" y="671.2" width="4.5" height="1" fill="#7a1040"/>
<rect x="16" y="673.4" width="1.3" height="1" fill="#7a1040"/><rect x="19" y="673.4" width="4.5" height="1" fill="#7a1040"/>
<rect x="16" y="675.6" width="1.3" height="1" fill="#7a1040"/><rect x="19" y="675.6" width="4.5" height="1" fill="#7a1040"/>
<rect x="16" y="677.8" width="1.3" height="1" fill="#7a1040"/><rect x="19" y="677.8" width="4.5" height="1" fill="#7a1040"/>
<path d="M13,676 h8" stroke="#1a2a6a" stroke-width="1.4"/><path d="M23,676 l-4,-3 v6 Z" fill="#1a2a6a"/>
<rect x="45" y="417.7" width="10.4" height="1.2" fill="#a8a8a8"/>
<path d="M50.2,419.5 L45,424.5 L55.4,424.5 Z M50.2,424 L45,429.5 L55.4,429.5 Z" fill="#a8a8a8"/>
<path d="M50.2,482.7 L45,487.5 L55.4,487.5 Z M50.2,487.5 L45,492.5 L55.4,492.5 Z" fill="#b0b0b0"/>
<path d="M50.2,547 L45,553.6 L55.4,553.6 Z" fill="#b8b8b8"/>
<path d="M288.8,369 L285,373.5" stroke="#c8a878" stroke-width="3.2" stroke-linecap="round"/>
<path d="M288.8,369 L285,373.5" stroke="#e0c8a0" stroke-width="1.4" stroke-linecap="round"/>
<path d="M281,375.2 L287.6,377.2 L287.2,383.6 Q283,383.8 278,382.8 L276,380.6 Z" fill="#f0e68e" stroke="#d8c868" stroke-width="0.7"/>
<path d="M281.3,375.3 L287.8,377.3" stroke="#a898c8" stroke-width="1.5"/>
<rect x="310" y="375" width="5" height="2.6" fill="#0e8a30"/>
<path d="M316.8,375 v-3.3 h1.6" fill="none" stroke="#1a8a6a" stroke-width="1.2"/>
<path d="M316.3,376.4 h8" stroke="#9a2a9a" stroke-width="1.2"/>
<path d="M317.3,378.3 v4.2 h7" fill="none" stroke="#7a8a10" stroke-width="1.3"/>
<path d="M321.6,368.2 L325,371.6 L321.6,375 L318.2,371.6 Z" fill="#fff8e0" stroke="#b8902a" stroke-width="1.1"/>
<path d="M319.9,371.6 h3.4 M321.6,369.9 v3.4" stroke="#e8d8a8" stroke-width="0.8"/>
<rect x="338.5" y="370.5" width="10" height="10" fill="#e4ecf8" stroke="#8a9ab8" stroke-width="1"/>
<rect x="340.5" y="372.5" width="10.5" height="10.5" fill="#eef4fc" stroke="#8a9ab8" stroke-width="1"/>
<path d="M342.5,377.7 h6.5 M345.75,374.5 v6.5" stroke="#1a3a7a" stroke-width="1.4"/>
<rect x="365.5" y="370.5" width="10" height="10" fill="#e4ecf8" stroke="#8a9ab8" stroke-width="1"/>
<rect x="367.5" y="372.5" width="10.5" height="10.5" fill="#eef4fc" stroke="#8a9ab8" stroke-width="1"/>
<path d="M369.5,377.7 h6.5" stroke="#1a3a7a" stroke-width="1.4"/>
<rect x="26.5" y="144.5" width="61.8" height="20.8" fill="none" stroke="#ff0000" stroke-width="3"/>
<rect x="8.5" y="660.5" width="21" height="24" fill="none" stroke="#ff0000" stroke-width="3"/>
<rect x="674.4" y="386.2" width="99.2" height="13.3" fill="none" stroke="#ff0000" stroke-width="3"/>
<path d="M19.5,659 L43.6,172" stroke="#ff0000" stroke-width="3" fill="none"/>
<path d="M44.3,164.5 L38,177.8 L43.6,175 L49.6,178.3 Z" fill="#ff0000"/>
<path d="M81,167 L666,381" stroke="#ff0000" stroke-width="3" fill="none"/>
<path d="M674.6,384.6 L663.6,374 L664.6,379.8 L659.8,385 Z" fill="#ff0000"/></svg>
</body></html>
